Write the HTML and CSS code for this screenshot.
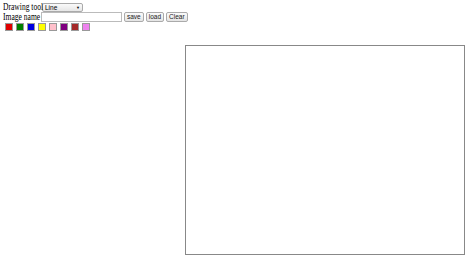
FILE: index.html
```html
<!DOCTYPE html>
<html lang="en">
<head>
<meta charset="UTF-8">
<title>Drawing</title>
<link rel="stylesheet" href="styles.css">
</head>
<body>
<div id="tools">
  <div class="row">
    <label for="tool">Drawing tool</label>
    <span class="pick" id="tool">Line<span class="arrow">&#9660;</span></span>
  </div>
  <div class="row">
    <label for="name">Image name</label>
    <input id="name" type="text">
    <button class="btn">save</button>
    <button class="btn">load</button>
    <button class="btn">Clear</button>
  </div>
  <div class="swatches">
    <span class="sw" style="background:#e00000"></span>
    <span class="sw" style="background:#008000"></span>
    <span class="sw" style="background:#0000e0"></span>
    <span class="sw" style="background:#ffff00"></span>
    <span class="sw" style="background:#ffc0cb"></span>
    <span class="sw" style="background:#800080"></span>
    <span class="sw" style="background:#a52a2a"></span>
    <span class="sw" style="background:#ee82ee"></span>
  </div>
</div>
<div id="board">
  <canvas id="paper" width="278" height="208"></canvas>
</div>
</body>
</html>
```
FILE: styles.css
```css
body{margin:2px 3px;font-family:"Liberation Serif",serif;font-size:10.5px;color:#000;background:#fff}
.row{display:flex;align-items:center;height:10px}
label{display:inline-block;width:38px;white-space:nowrap;line-height:10px;transform:scaleX(.72);transform-origin:0 50%}
.pick{display:flex;justify-content:space-between;align-items:center;box-sizing:border-box;width:41px;height:9px;padding:0 2px;margin-left:1px;border:1px solid #aaa;border-radius:2px;background:linear-gradient(#fafafa,#e6e6e6);font-family:"Liberation Sans",sans-serif;font-size:6.5px}
.arrow{font-size:4px}
input[type=text]{box-sizing:border-box;width:81px;height:10px;margin:0 2px 0 0;padding:0;border:1px solid #bbb}
.btn{box-sizing:border-box;height:10px;margin-right:2px;padding:0 2px;border:1px solid #aaa;border-radius:2px;background:linear-gradient(#fbfbfb,#e4e4e4);font-family:"Liberation Sans",sans-serif;font-size:6.5px;line-height:8px;color:#222}
.swatches{display:flex;gap:3px;margin:1px 0 0 2px}
.sw{width:8px;height:8px;border:1px solid #999;box-sizing:border-box}
#board{display:flex;justify-content:flex-end;padding-right:6px;margin-top:14px}
#paper{border:1px solid #888;background:#fff}
```
